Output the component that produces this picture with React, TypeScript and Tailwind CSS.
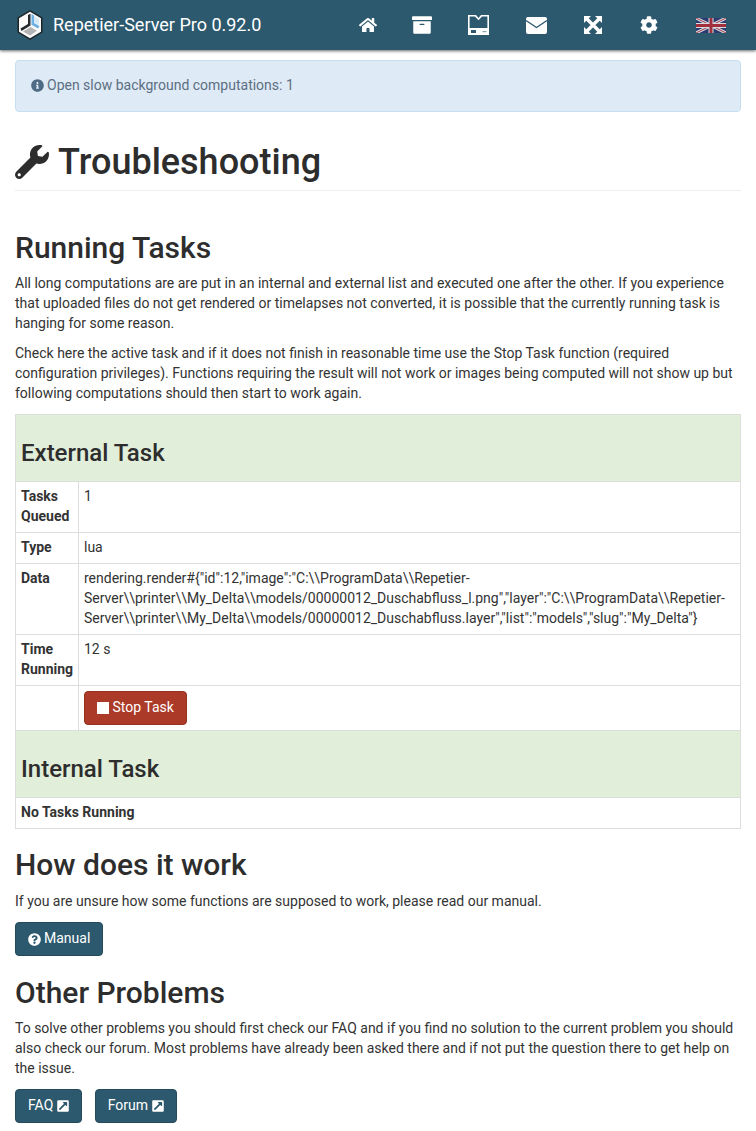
import React from "react";
import { FaHome, FaArchive, FaCog, FaWrench, FaInfoCircle, FaQuestionCircle, FaExternalLinkSquareAlt } from "react-icons/fa";

function Logo() {
  return (
    <svg width="26" height="30" viewBox="0 0 26 30" className="mr-[10px]">
      <polygon points="13,0 25.5,7.5 25.5,22.5 13,30 0.5,22.5 0.5,7.5" fill="#1c262b" />
      <polygon points="13,1.8 24,8.3 24,21.7 13,28.2 2,21.7 2,8.3" fill="#fafafa" />
      <polygon points="11,5 13.5,3.8 13.5,15.5 4.5,21 3.5,18.5 11,14" fill="#23292d" />
      <polygon points="14.5,4 17,5.5 17,13 22.5,16 21,18.5 14.5,14.8" fill="#6db0e3" />
      <polygon points="17,6 22,9 22,15 17,12.5" fill="#d7e8f5" />
      <polygon points="6,21.5 13.5,17 20,20.8 13,25.5" fill="#b4b4b4" />
    </svg>
  );
}

function Nav() {
  return (
    <header className="h-[50px] bg-[#2c596d] shadow-[0_1px_3px_rgba(0,0,0,0.6)] flex items-center pl-[17px] text-white relative">
      <Logo />
      <span className="text-[18px] leading-[20px] text-white">Repetier-Server Pro 0.92.0</span>
      <div className="ml-auto flex items-center h-full pr-[9px]">
        <div className="w-[58px] flex justify-center"><FaHome className="text-[18px]" /></div>
        <div className="w-[50px] flex justify-center"><FaArchive className="text-[20px]" /></div>
        <div className="w-[62px] flex justify-center">
          <svg width="21" height="20" viewBox="0 0 21 20">
            <path d="M0 0H8L10.5 3L13 0H21V20H0Z M1.6 1.6V13H19.4V1.6H14L10.5 5.2L7 1.6Z" fill="#fff" fillRule="evenodd" />
            <rect x="3" y="15" width="5" height="3" fill="#2c596d" />
            <rect x="14.5" y="16" width="4" height="1.2" fill="#8fa5b0" />
          </svg>
        </div>
        <div className="w-[54px] flex justify-center">
          <svg width="21" height="17" viewBox="0 0 21 17">
            <rect width="21" height="17" rx="2" fill="#fff" />
            <path d="M0 3.5L10.5 10.5L21 3.5" fill="none" stroke="#2c596d" strokeWidth="1.4" />
          </svg>
        </div>
        <div className="w-[60px] flex justify-center">
          <svg width="18" height="18" viewBox="0 0 18 18" fill="#fff">
            <polygon points="0,0 7,0 0,7" />
            <polygon points="18,0 11,0 18,7" />
            <polygon points="0,18 7,18 0,11" />
            <polygon points="18,18 11,18 18,11" />
            <path d="M3 3L15 15M15 3L3 15" stroke="#fff" strokeWidth="3.4" />
          </svg>
        </div>
        <div className="w-[52px] flex justify-center"><FaCog className="text-[18px]" /></div>
        <div className="w-[72px] flex justify-center">
          <svg width="30" height="15" viewBox="0 0 60 30">
            <rect width="60" height="30" fill="#2d3a70" />
            <path d="M0 0L60 30M60 0L0 30" stroke="#d8dbe0" strokeWidth="6" />
            <path d="M0 0L60 30M60 0L0 30" stroke="#a33a4a" strokeWidth="2" />
            <path d="M30 0V30M0 15H60" stroke="#d8dbe0" strokeWidth="10" />
            <path d="M30 0V30M0 15H60" stroke="#a32f3e" strokeWidth="6" />
          </svg>
        </div>
      </div>
    </header>
  );
}

function Btn({ children, cls }: { children: React.ReactNode; cls?: string }) {
  return (
    <button className={`inline-flex items-center h-[34px] px-[12px] pb-[2px] rounded-[4px] text-white text-[14px] leading-[20px] border ${cls ?? "bg-[#2c596d] border-[#244a5b]"}`}>
      {children}
    </button>
  );
}

function H2({ children, cls }: { children: React.ReactNode; cls: string }) {
  return <h2 className={`text-[30px] leading-[33px] font-medium text-[#2d2d2d] ${cls}`}>{children}</h2>;
}

function Row({ label, children, h }: { label?: string; children: React.ReactNode; h: string }) {
  return (
    <div className={`flex border-t border-[#ddd] ${h}`}>
      <div className="w-[63px] shrink-0 border-r border-[#ddd] pl-[5px] pr-[2px] pt-[4px] font-bold">{label}</div>
      <div className="flex-1 px-[5px] pt-[4px]">{children}</div>
    </div>
  );
}

export default function App() {
  return (
    <div className="w-[756px] h-[1131px] overflow-hidden bg-white text-[14px] leading-[20px] text-[#333]" style={{ fontFamily: "Roboto, sans-serif" }}>
      <Nav />
      <main className="px-[15px]">
        <div className="mt-[10px] h-[52px] rounded-[4px] bg-[#deeaf6] border border-[#c5dff0] pl-[15px] pb-[2px] flex items-center text-[#5c6f82]">
          <FaInfoCircle className="text-[13px] mr-[3px] text-[#4f6a85]" />
          Open slow background computations: 1
        </div>

        <div className="mt-[27px] pb-[6px] border-b border-[#eee] flex items-center h-[52px]">
          <FaWrench className="text-[34px] text-[#2d2d2d] mr-[9px]" />
          <h1 className="text-[36px] leading-[40px] font-medium text-[#2d2d2d]">Troubleshooting</h1>
        </div>

        <H2 cls="mt-[40px]">Running Tasks</H2>
        <p className="mt-[9px]">All long computations are are put in an internal and external list and executed one after the other. If you experience that uploaded files do not get rendered or timelapses not converted, it is possible that the currently running task is hanging for some reason.</p>
        <p className="mt-[10px]">Check here the active task and if it does not finish in reasonable time use the Stop Task function (required configuration privileges). Functions requiring the result will not work or images being computed will not show up but following computations should then start to work again.</p>

        <div className="mt-[11px] border border-[#ddd]">
          <div className="h-[66px] bg-[#e1eed9] flex items-center pl-[5px] pt-[10px]">
            <h3 className="text-[24px] leading-[26px] font-medium text-[#2d2d2d]">External Task</h3>
          </div>
          <Row label="Tasks Queued" h="h-[51px]">1</Row>
          <Row label="Type" h="h-[31px]">lua</Row>
          <Row label="Data" h="h-[71px]">
            rendering.render#{'{'}"id":12,"image":"C:\\ProgramData\\Repetier-Server\\printer\\My_Delta\\models/00000012_Duschabfluss_l.png","layer":"C:\\ProgramData\\Repetier-Server\\printer\\My_Delta\\models/00000012_Duschabfluss.layer","list":"models","slug":"My_Delta"{'}'}
          </Row>
          <Row label="Time Running" h="h-[51px]">12 s</Row>
          <Row h="h-[45px]">
            <div className="pt-[1px]">
              <Btn cls="bg-[#ac3a28] border-[#96301f]">
                <span className="w-[12px] h-[12px] bg-white mr-[3.5px] mt-[2px]" />Stop Task
              </Btn>
            </div>
          </Row>
          <div className="h-[67px] bg-[#e1eed9] border-t border-[#ddd] flex items-center pl-[5px] pt-[10px]">
            <h3 className="text-[24px] leading-[26px] font-medium text-[#2d2d2d]">Internal Task</h3>
          </div>
          <div className="h-[31px] border-t border-[#ddd] pl-[5px] pt-[4px] font-bold">No Tasks Running</div>
        </div>

        <H2 cls="mt-[19px]">How does it work</H2>
        <p className="mt-[10px]">If you are unsure how some functions are supposed to work, please read our manual.</p>
        <div className="mt-[11px]"><Btn><FaQuestionCircle className="text-[13px] mr-[3px] mt-[2px]" />Manual</Btn></div>

        <H2 cls="mt-[20px]">Other Problems</H2>
        <p className="mt-[9px]">To solve other problems you should first check our FAQ and if you find no solution to the current problem you should also check our forum. Most problems have already been asked there and if not put the question there to get help on the issue.</p>
        <div className="mt-[11px] flex gap-[13px]">
          <Btn>FAQ<FaExternalLinkSquareAlt className="text-[12px] ml-[3.5px] mt-[2px] scale-110" /></Btn>
          <Btn>Forum<FaExternalLinkSquareAlt className="text-[12px] ml-[3.5px] mt-[2px] scale-110" /></Btn>
        </div>
      </main>
    </div>
  );
}
